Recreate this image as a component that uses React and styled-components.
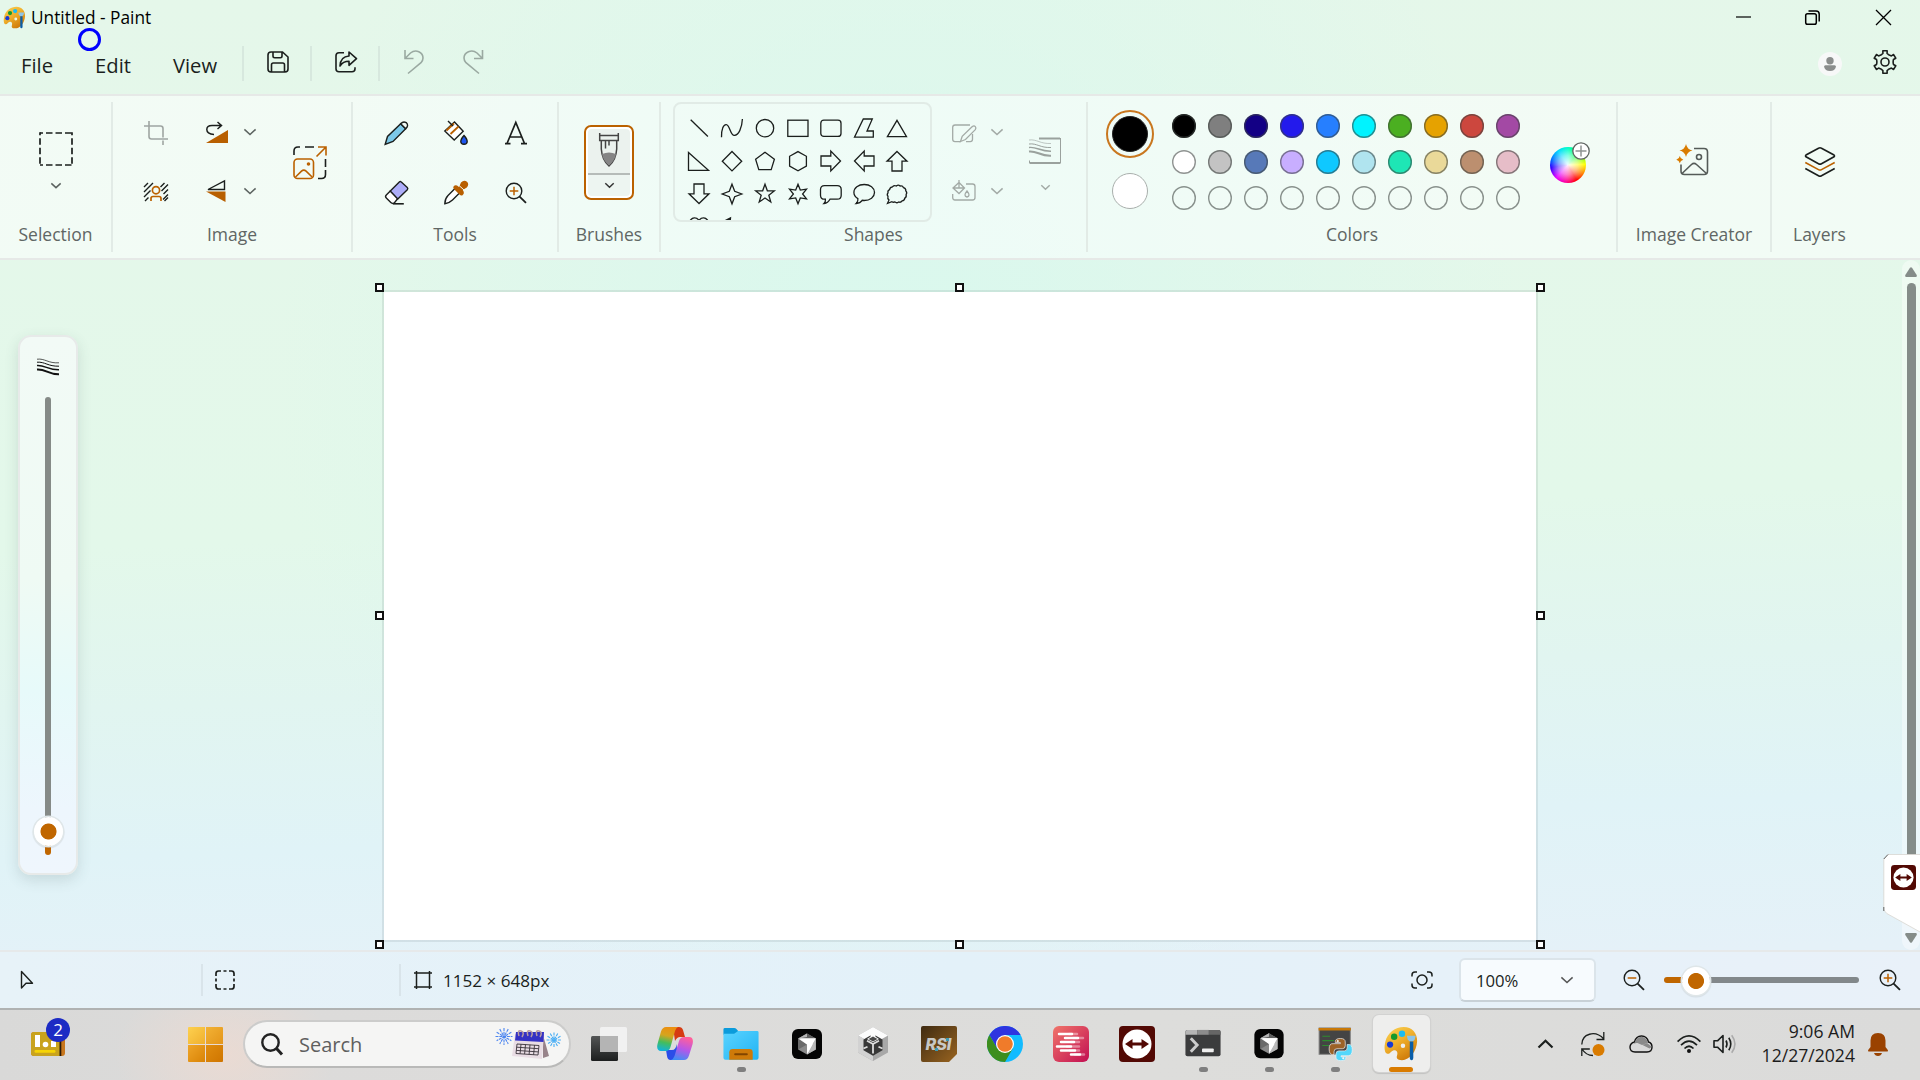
import React from "react";
import styled, { createGlobalStyle } from "styled-components";

const GlobalStyle = createGlobalStyle`
  *, *::before, *::after { box-sizing: border-box; }
  body { margin: 0; overflow: hidden; }
`;

const INK = "#1b1f1d";
const ACCENT = "#bb6100";
const MUTED = "#a3aaa6";

/* ---------- shell ---------- */

const Desktop = styled.div`
  width: 1920px;
  height: 1080px;
  display: flex;
  flex-direction: column;
  position: relative;
  overflow: hidden;
  font-family: "Open Sans", "Noto Sans", sans-serif;
  color: ${INK};
  background:
    radial-gradient(ellipse 620px 700px at 900px 380px, rgba(216, 248, 238, 0.9), rgba(216, 248, 238, 0) 100%),
    linear-gradient(178deg, #e5f7ea 0%, #e3f8ea 48%, #e1f5f0 62%, #e0f3f7 75%, #e5f1f8 88%, #e6f1f9 100%);
`;

const TitleBar = styled.header`
  height: 34px;
  flex: none;
  display: flex;
  align-items: center;
  padding-left: 3px;
`;

const Title = styled.span`
  margin-left: 5px;
  padding-top: 2px;
  flex: 1;
  font-size: 17.3px;
  color: #000;
  line-height: 34px;
`;

const WindowButton = styled.button`
  width: ${(p) => p.$w}px;
  height: 33px;
  padding: 0;
  border: 0;
  background: none;
  display: flex;
  align-items: center;
  justify-content: center;
`;

const MenuBar = styled.nav`
  height: 62px;
  flex: none;
  display: flex;
  align-items: center;
  padding: 0 23px 4px 0;
  border-bottom: 2px solid #e6e9e7;
`;

const MenuItem = styled.span`
  width: ${(p) => p.$w}px;
  padding-top: 5px;
  text-align: center;
  font-size: 20.2px;
  line-height: 30px;
`;

const MenuRule = styled.i`
  width: 2px;
  height: 35px;
  background: #d7e8de;
  margin-left: ${(p) => p.$ml || 0}px;
  margin-top: 2px;
`;

const Slot = styled.span`
  display: flex;
  align-items: center;
  justify-content: center;
  flex: none;
  width: ${(p) => p.$w || 60}px;
  height: ${(p) => (p.$h ? p.$h + "px" : "auto")};
  margin-left: ${(p) => p.$ml || 0}px;
  padding-left: ${(p) => p.$pl || 0}px;
  padding-bottom: ${(p) => p.$pb || 0}px;
`;

const Spacer = styled.span`
  flex: 1;
`;

const Avatar = styled.span`
  width: 24px;
  height: 24px;
  margin: 3px 31px 0 0;
  border-radius: 50%;
  background: #f7f8f8;
  display: flex;
  align-items: center;
  justify-content: center;
`;

const Glyph = styled.svg`
  display: block;
  flex: none;
  overflow: visible;
  fill: none;
  stroke: ${(p) => p.$c || INK};
  stroke-width: ${(p) => p.$sw || 1.4};
`;

/* ---------- ribbon ---------- */

const Ribbon = styled.section`
  height: 164px;
  flex: none;
  display: flex;
  padding: 6px 0;
  border-bottom: 2px solid #e6e9e7;
  background: rgba(255, 255, 255, 0.53);
`;

const GroupBox = styled.div`
  width: ${(p) => p.$w}px;
  height: 150px;
  flex: none;
  display: flex;
  flex-direction: column;
  border-right: ${(p) => (p.$last ? 0 : 2)}px solid #e2ebe6;
`;

const GroupBody = styled.div`
  height: 120px;
  display: flex;
  justify-content: ${(p) => p.$justify || "flex-start"};
`;

const GroupLabel = styled.div`
  text-align: center;
  font-size: 17.5px;
  line-height: 24px;
  white-space: nowrap;
  color: #606664;
`;

const Stack = styled.div`
  display: flex;
  flex-direction: column;
  align-items: center;
  padding-top: ${(p) => p.$pt || 0}px;
  gap: ${(p) => p.$gap || 0}px;
  margin-left: ${(p) => p.$ml || 0}px;
`;

const Row = styled.div`
  display: flex;
  height: 60px;
  align-items: center;
`;

const ToolGrid = styled.div`
  display: grid;
  grid-template-columns: repeat(3, 60px);
  grid-auto-rows: 60px;
  padding: 1px 0 0 13px;
  place-items: center;
`;

const BrushButton = styled.button`
  width: 50px;
  height: 75px;
  margin: 23px 0 0;
  padding: 2px;
  border: 2px solid ${ACCENT};
  border-radius: 7px;
  background: #fff;
  display: flex;
  flex-direction: column;
`;

const BrushFace = styled.span`
  width: 100%;
  height: 46px;
  flex: none;
  border-radius: 4px 4px 0 0;
  border-bottom: 2px solid #b5bbb8;
  background: #ebf2ee;
  display: flex;
  align-items: flex-start;
  justify-content: center;
  padding-top: 4px;
`;

const BrushMore = styled.span`
  width: 100%;
  flex: 1;
  border-radius: 0 0 4px 4px;
  background: #edf5f1;
  display: flex;
  align-items: center;
  justify-content: center;
`;

const ShapeGallery = styled.div`
  width: 259px;
  height: 120px;
  margin-left: 12px;
  padding: 7px 8px 0 7.5px;
  border: 2px solid #e1ebe6;
  border-radius: 8px;
  overflow: hidden;
  display: grid;
  grid-template-columns: repeat(7, 33px);
  grid-auto-rows: 33px;
  place-items: center;
`;

const CurrentColor = styled.span`
  width: 48px;
  height: 48px;
  border-radius: 50%;
  border: ${(p) => (p.$on ? "2px solid #c9771f" : "0")};
  display: flex;
  align-items: center;
  justify-content: center;
  &::before {
    content: "";
    width: 36px;
    height: 36px;
    border-radius: 50%;
    border: 1.5px solid ${(p) => (p.$on ? "#222" : "#a9afac")};
    background: ${(p) => p.$c};
  }
`;

const Palette = styled.div`
  display: grid;
  grid-template-columns: repeat(10, 36px);
  grid-auto-rows: 36px;
  place-items: center;
  padding-top: 6px;
  margin-left: 12px;
`;

const Swatch = styled.i`
  width: 24px;
  height: 24px;
  border-radius: 50%;
  background: ${(p) => p.$c};
  box-shadow: inset 0 0 0 1.4px rgba(60, 68, 64, 0.58);
`;

const Wheel = styled.span`
  position: relative;
  width: 36px;
  height: 36px;
  margin: 45px 0 0 24px;
  border-radius: 50%;
  background:
    radial-gradient(circle, rgba(255, 255, 255, 0.95) 0%, rgba(255, 255, 255, 0.5) 38%, rgba(255, 255, 255, 0) 68%),
    conic-gradient(#00ffc8, #00ff3c 40deg, #ffff00 88deg, #ff7a00 122deg, #ff0000 150deg, #ff0090 185deg, #e600ff 222deg, #2a00ff 262deg, #0060ff 285deg, #00d8ff 325deg, #00ffc8);
`;

const WheelBadge = styled.span`
  position: absolute;
  left: 22px;
  top: -5px;
  width: 18px;
  height: 18px;
`;

/* ---------- workspace ---------- */

const Workspace = styled.main`
  height: 692px;
  flex: none;
  display: flex;
  align-items: flex-start;
  border-bottom: 2px solid #e6e9ea;
`;

const SizePanel = styled.aside`
  width: 60px;
  height: 540px;
  margin: 75px 0 0 18px;
  border: 2px solid #e7eae9;
  border-radius: 13px;
  background: linear-gradient(#f2faf6, #effaf4 45%, #e7fafa 66%, #edf6fd 88%, #eff6fd);
  box-shadow: 0 5px 14px rgba(60, 90, 90, 0.16);
  display: flex;
  flex-direction: column;
  align-items: center;
  padding-top: 21px;
`;

const VTrack = styled.div`
  width: 6px;
  height: 458px;
  margin-top: 21px;
  border-radius: 3px;
  background: linear-gradient(#858a87 0 435px, #c06600 435px);
  display: flex;
  justify-content: center;
`;

const Thumb = styled.i`
  flex: none;
  width: ${(p) => p.$d}px;
  height: ${(p) => p.$d}px;
  border-radius: 50%;
  background: radial-gradient(circle, #c06600 0 7.6px, #fff 8.4px);
  box-shadow: 0 0 0 1.5px #dfe6e8, 0 1px 1px 1.5px rgba(0, 0, 0, 0.08);
  margin-top: ${(p) => p.$mt || 0}px;
  margin-left: ${(p) => p.$ml || 0}px;
`;

const Sheet = styled.div`
  position: relative;
  width: 1156px;
  height: 652px;
  margin: 30px 0 0 304px;
  border: 2px solid rgba(90, 110, 108, 0.13);
  background: #fff;
  background-clip: padding-box;
`;

const Handle = styled.i`
  position: absolute;
  left: ${(p) => p.$x}px;
  top: ${(p) => p.$y}px;
  width: 9px;
  height: 9px;
  border: 2px solid #111;
  background: #fff;
`;

const ScrollBar = styled.div`
  width: 18px;
  height: 690px;
  margin-left: auto;
  padding: 7px 0;
  border-radius: 9px;
  background: rgba(255, 255, 255, 0.4);
  display: flex;
  flex-direction: column;
  align-items: center;
`;

const ScrollThumb = styled.i`
  width: 9px;
  height: 639px;
  margin: 6px 0 11px;
  border-radius: 5px;
  background: #858c89;
`;

const RemoteTab = styled.div`
  position: absolute;
  left: 1883px;
  top: 854px;
  width: 37px;
  height: 79px;
`;

const ClickMark = styled.i`
  position: absolute;
  left: 78px;
  top: 28px;
  width: 23px;
  height: 23px;
  border: 3px solid #0000fe;
  border-radius: 50%;
`;

/* ---------- status bar ---------- */

const StatusBar = styled.footer`
  height: 56px;
  flex: none;
  display: flex;
  align-items: center;
  background: linear-gradient(90deg, #e7f2f8, #e3f1f9 50%, #e9f1f9);
`;

const StatusCell = styled.div`
  width: ${(p) => p.$w}px;
  height: 32px;
  padding-left: ${(p) => p.$pl}px;
  border-right: ${(p) => (p.$end ? 0 : 2)}px solid #d9e4ea;
  display: flex;
  align-items: center;
  font-size: 17.1px;
  gap: 11px;
  white-space: nowrap;
`;

const ZoomSelect = styled.div`
  width: 137px;
  height: 44px;
  margin-left: 26px;
  padding: 0 21px 0 15px;
  border: 2px solid #dbe4ea;
  border-bottom-color: #c8d1d7;
  border-radius: 6px;
  background: #f7fbfe;
  display: flex;
  align-items: center;
  justify-content: space-between;
  font-size: 16.7px;
`;

const HTrack = styled.div`
  width: 195px;
  height: 6px;
  margin: 0 19px 0 18px;
  border-radius: 3px;
  background: linear-gradient(90deg, #c06600 0 31px, #82888b 31px);
  display: flex;
  align-items: center;
`;

/* ---------- taskbar ---------- */

const Taskbar = styled.footer`
  height: 72px;
  flex: none;
  display: flex;
  align-items: center;
  padding-bottom: 2px;
  border-top: 2px solid #b0b2b2;
  background:
    radial-gradient(ellipse 110px 80px at 225px 45px, rgba(240, 218, 208, 0.7), rgba(240, 218, 208, 0)),
    linear-gradient(90deg, #d9d9d8, #dcdbda 15%, #dddddb 60%, #dbdbda);
`;

const WidgetButton = styled.div`
  position: relative;
  width: 34px;
  height: 24px;
  margin: 0 123px 0 31px;
`;

const CountBadge = styled.span`
  position: absolute;
  left: 15px;
  top: -14px;
  width: 24px;
  height: 24px;
  border-radius: 50%;
  background: #1c2bc4;
  color: #fff;
  font-size: 17px;
  line-height: 23px;
  text-align: center;
`;

const StartLogo = styled.div`
  width: 35px;
  height: 35px;
  display: grid;
  grid-template-columns: 17px 17px;
  grid-template-rows: 17px 17px;
  gap: 1px;
  i:nth-child(1) { background: linear-gradient(135deg, #fdd04f, #f0b02e); border-radius: 1px 0 0 0; }
  i:nth-child(2) { background: linear-gradient(135deg, #f2b235, #e4951a); border-radius: 0 1px 0 0; }
  i:nth-child(3) { background: linear-gradient(135deg, #efa528, #d98306); border-radius: 0 0 0 1px; }
  i:nth-child(4) { background: linear-gradient(135deg, #e08d10, #cf7500); border-radius: 0 0 1px 0; }
`;

const SearchBox = styled.div`
  width: 328px;
  height: 48px;
  margin: 0 5px 0 20px;
  padding: 0 7px 0 16px;
  border: 2px solid #cccccb;
  border-bottom-color: #b9b9b8;
  border-radius: 24px;
  background: #f5f5f4;
  display: flex;
  align-items: center;
  font-size: 20px;
  color: #5f5f5f;
  gap: 16px;
`;

const TaskSlot = styled.div`
  width: 66px;
  height: 68px;
  flex: none;
  display: flex;
  justify-content: center;
`;

const TaskTile = styled.div`
  width: 57px;
  height: 57px;
  margin-top: 5px;
  border-radius: 6px;
  display: flex;
  flex-direction: column;
  align-items: center;
  padding-top: 11px;
  background: ${(p) => (p.$active ? "#eeeeed" : "transparent")};
  box-shadow: ${(p) => (p.$active ? "0 0 0 1px #d2d2d1, 0 1px 1px 1px rgba(0,0,0,.12)" : "none")};
`;

const RunMark = styled.i`
  width: ${(p) => (p.$active ? 24 : 9)}px;
  height: 5px;
  margin-top: 6px;
  border-radius: 3px;
  background: ${(p) => (p.$active ? "#d97b00" : "#7f7f7f")};
`;

const Clock = styled.div`
  width: 110px;
  margin: 0 13px 3px 6px;
  text-align: right;
  font-size: 17.6px;
  line-height: 24px;
  color: #1c1c1c;
`;

/* ---------- glyphs ---------- */

const Chevron = ({ w = 12, c = "#5c6360", sw = 1.5 }) => (
  <Glyph width={w} height={w / 2} viewBox="0 0 12 6" $c={c} $sw={(sw * 12) / w}>
    <path d="M.4.4 6 5.6 11.6.4" />
  </Glyph>
);

const PaintLogo = ({ s }) => (
  <svg width={s} height={s} viewBox="0 0 36 36">
    <defs>
      <linearGradient id={"pal" + s} x1="0" y1="0" x2=".6" y2="1">
        <stop offset="0" stopColor="#f9d356" />
        <stop offset=".5" stopColor="#f0b02c" />
        <stop offset="1" stopColor="#d07c0a" />
      </linearGradient>
    </defs>
    <path fill={`url(#pal${s})`} d="M21 1C29 1 35 7 34.500 16 34 26 27 35 19 35c-5 0-6-2-5-5 1.200-3.500-1-6-4-5-3 1-3 4-6 3.500C1 28 .5 22 2 16 4 7 12 1 21 1Zm-1 17a2.300 2.300 0 1 0 .01 4.600A2.300 2.300 0 0 0 20 18Z" />
    <circle cx="19" cy="8" r="3.300" fill="#1cbcf2" />
    <circle cx="11" cy="11" r="3.300" fill="#149a2d" />
    <circle cx="6.800" cy="19" r="3.200" fill="#1739d4" />
    <path fill="#8cc4ea" d="M24 10h9l-1 4-2 2h-3l-2-2Z" />
    <path fill="#0b5ea8" d="M27 16h3.600v16q0 3-1.800 3T27 32Z" />
  </svg>
);

const gearPoints = Array.from({ length: 6 }, (_, k) => {
  const a = (k * 60 - 90) * (Math.PI / 180);
  return [[-0.42, 8.2], [-0.24, 8.8], [-0.19, 11.4], [0.19, 11.4], [0.24, 8.8], [0.42, 8.2]]
    .map(([d, r]) => `${(12 + r * Math.cos(a + d)).toFixed(2)},${(12 + r * Math.sin(a + d)).toFixed(2)}`)
    .join(" ");
}).join(" ");

const Waves = ({ c = "#111", w = 22 }) => (
  <Glyph width={w} height="18" viewBox="0 0 22 18" $c={c}>
    <path strokeWidth=".7" d="M0 1.200c8-1 11 4.300 22 3.600" />
    <path strokeWidth="1" d="M0 4.200c8-.6 11 4.300 22 4" />
    <path strokeWidth="1.400" d="M0 7.500c8-.6 11 4.500 22 4.300" />
    <path strokeWidth="2" d="M0 11.500c9-.6 11 5 22 4.800" />
  </Glyph>
);

const star = (n, R, r, rot = -90) =>
  Array.from({ length: n * 2 }, (_, i) => {
    const a = ((i * 180) / n + rot) * (Math.PI / 180);
    const q = i % 2 ? r : R;
    return `${(12 + q * Math.cos(a)).toFixed(2)},${(12 + q * Math.sin(a)).toFixed(2)}`;
  }).join(" ");

const ARROW = "12,2.5 22,12.2 17,12.2 17,22 7,22 7,12.2 2,12.2";

const SHAPES = [
  <path d="m3.700 3.700 17.200 16.800" />,
  <path d="M1.500 21.300C1.300 13 3.500 8.300 6.300 8.600c3.700.4 3.700 10.400 8 10.800C18.500 19.600 22 12 22.400 3" />,
  <circle cx="12" cy="12.200" r="8.700" />,
  <rect x="1.800" y="4.200" width="20.200" height="16.200" />,
  <rect x="1.800" y="4.200" width="20.200" height="16.200" rx="3" />,
  <path d="M11.300 3h9L15 15h6.300v6.100H2.500Z" />,
  <path d="M12 4.400 21.500 20.600H2.400Z" />,
  <path d="M1.500 3.500v17.800h20Z" />,
  <path d="M12 2.500 21.700 12.200 12 21.900 2.300 12.200Z" />,
  <path d="M12 3.200 21.400 10.200 18.200 20.600H5.800L2.600 10.200Z" />,
  <path d="m12 2.600 8.400 4.700v9.700L12 21.800 3.600 17V7.300Z" />,
  <polygon points={ARROW} transform="rotate(90 12 12)" />,
  <polygon points={ARROW} transform="rotate(-90 12 12)" />,
  <polygon points={ARROW} />,
  <polygon points={ARROW} transform="rotate(180 12 12)" />,
  <polygon points={star(4, 9.8, 3.8)} />,
  <polygon points={star(5, 9.8, 4)} />,
  <polygon points={star(6, 9.8, 4.6)} />,
  <path d="M5.500 3.600h12.700q4 0 4 4v5.600q0 4-4 4H11c-1.200 2.300-3 4-6 4.300 1.200-1.200 1.700-2.600 1.400-4.300H5.500q-4 0-4-4V7.600q0-4 4-4Z" />,
  <path d="M12.200 2.500c5.900 0 10.300 3.600 10.300 8s-4.400 8-10.300 8l-2-.2c-1.200 1.800-3 2.900-6 3.200 1.400-1.300 2-2.900 1.700-4.900C3.500 15.200 1.900 13 1.900 10.500c0-4.400 4.400-8 10.300-8Z" />,
  <path d="M7.500 4.800q1.800-2 3.800-.8 2-1.800 3.800 0 2.600-.6 3.400 1.700 2.600.7 2.300 3.200 1.700 1.800.3 3.700.7 2.300-1.300 3.500-.2 2.500-2.700 2.800-1.300 2-3.500 1.100-2 1.500-3.700-.1-1.600.8-3-.2l-4.400 1.600 1.500-3.300Q2.200 16.600 3 14.400q-1.500-1.800 0-3.500-.6-2.400 1.600-3.300.3-2.500 2.900-2.800Z" />,
  <path d="M12 21.500 3.500 13.500C-1 8.500 5.500-1.500 12 5.200c6.500-6.700 13 3.300 8.500 8.300Z" />,
  <path d="M2.500 7 10.500 2.800 10 8l5 1-2 5 5 2-1 6-9-7 2-2-6-3Z" />,
];

const PALETTE = [
  "#000000", "#7f7f7f", "#130085", "#231aec", "#267fff", "#00f3ff", "#4baf21", "#e6a200", "#cc473e", "#a349a4",
  "#ffffff", "#c3c3c3", "#5779b8", "#c8aeff", "#0fc8ff", "#b0e4ef", "#1ee6b5", "#ead999", "#bc8f6f", "#e6bdc8",
  ...Array(10).fill("transparent"),
];

const Magnifier = ({ plus, s = 24 }) => (
  <Glyph width={s} height={s} viewBox="0 0 24 24">
    <circle cx="10" cy="10" r="7.800" />
    <path d="m15.600 15.600 6.400 6.300" strokeWidth="1.800" />
    <path stroke={ACCENT} strokeWidth="1.500" d={plus ? "M5.700 10h8.600M10 5.700v8.600" : "M5.700 10h8.600"} />
  </Glyph>
);

const RemoteLogo = ({ s, r = 4 }) => (
  <svg width={s} height={s} viewBox="0 0 36 36">
    <rect width="36" height="36" rx={r} fill="#520904" />
    <circle cx="18" cy="18" r="14.500" fill="#fff" />
    <path fill="#520904" d="m6 18 7.500-5v3.400h9V13l7.500 5-7.500 5v-3.400h-9V23Z" />
  </svg>
);

const CubeLogo = () => (
  <svg width="36" height="36" viewBox="0 0 36 36">
    <rect x="3" y="3" width="30" height="30" rx="6" fill="#050505" />
    <path fill="#8a8a8a" d="m18 7.500 8.800 5v11L18 28.500l-8.800-5v-11Z" />
    <path fill="#5e5e5e" d="m18 7.500 8.800 5H9.200Z" />
    <path fill="#b5b5b5" d="M18 7.500 9.200 12.500 18 11Z" />
    <path fill="#6a6a6a" d="M9.200 12.500v11L18 18.500Z" />
    <path fill="#f7f7f7" d="M9.200 12.500h17.600L22 18.300h4L18 28.500V18.500Z" />
    <path fill="#b9b9b9" d="m26.800 12.500v11l-8.800 5Z" />
    <path fill="#fff" d="M11 12.500h15.800L18.300 27.500v-9Z" />
  </svg>
);

const TASKS = [
  {
    id: "views",
    art: (
      <svg width="36" height="36" viewBox="0 0 36 36">
        <defs>
          <linearGradient id="tvd" x1="0" y1="0" x2="0" y2="1"><stop stopColor="#535555" /><stop offset="1" stopColor="#1c1e1e" /></linearGradient>
        </defs>
        <rect x="0" y="10" width="27" height="25" rx="1.500" fill="url(#tvd)" />
        <rect x="9" y="1" width="27" height="25" rx="1.500" fill="#f3f3f3" opacity=".9" />
        <rect x="9" y="10" width="18" height="16" fill="#b4b4b4" />
      </svg>
    ),
  },
  {
    id: "copilot",
    art: (
      <svg width="36" height="36" viewBox="0 0 36 36">
        <defs>
          <linearGradient id="cpa" x1=".5" y1="0" x2=".3" y2="1"><stop stopColor="#ec8f11" /><stop offset=".35" stopColor="#d5a51e" /><stop offset=".65" stopColor="#44bd5c" /><stop offset="1" stopColor="#10b3dd" /></linearGradient>
          <linearGradient id="cpb" x1=".6" y1="0" x2=".3" y2="1"><stop stopColor="#ff5f9b" /><stop offset=".5" stopColor="#b657e8" /><stop offset="1" stopColor="#3d8df5" /></linearGradient>
        </defs>
        <path fill="#d63b12" d="M16 1h6q3 0 4 3l2 7h-5q-3 0-5 4Z" />
        <path fill="#2a4de8" d="M9 24h6q4 0 4.500-6l1 10-4 6h-3q-3 0-3.500-4Z" />
        <path fill="url(#cpa)" d="M9 1h12q-2 1-3 4l-4.500 16q-1 4-5 4H4Q-1 25 .5 18L4 5.500Q5.500 1 9 1Z" />
        <path fill="url(#cpb)" d="M27 34H14q2.500-1 3.500-4L22 15q1.200-4 5-4h5q5 0 3.600 7L32 29.500Q30.500 34 27 34Z" />
      </svg>
    ),
  },
  {
    id: "files",
    run: true,
    art: (
      <svg width="36" height="36" viewBox="0 0 36 36">
        <defs><linearGradient id="fex" x1="0" y1="0" x2="1" y2="1"><stop stopColor="#5ad3ff" /><stop offset="1" stopColor="#22b4f4" /></linearGradient></defs>
        <path fill="#0b9bdb" d="M0 3.500Q0 2 1.500 2H11q1.500 0 2.300 1l2 2.500L12 9H0Z" />
        <path fill="url(#fex)" d="M0 8h11l4-3h19.500Q36 5 36 6.500v26q0 2-2 2H2q-2 0-2-2Z" />
        <path fill="#ce7a09" d="M6 34.500V27q0-3.500 3.500-3.500h17Q30 23.500 30 27v7.500Z" />
        <rect x="11" y="28" width="14" height="2" rx="1" fill="#814500" />
      </svg>
    ),
  },
  { id: "editor", art: <CubeLogo /> },
  {
    id: "hub",
    art: (
      <svg width="36" height="36" viewBox="0 0 36 36">
        <path fill="#a8a8a8" d="m18 1 15 8.500v17L18 35 3 26.500v-17Z" />
        <path fill="#fcfcfc" d="m18 1 15 8.500L18 18 3 9.500Z" />
        <path fill="#d2d2d2" d="M3 9.500 18 18v17L3 26.500Z" />
        <path fill="#383838" d="m18 8 9.500 5.500v10.800L18 29.800l-9.500-5.500V13.500Z" />
        <path fill="#fcfcfc" d="m18 6 2.500 1.500v3.300L24 13l-6 3.200L12 13l3.500-2.200V7.500Z" />
        <path fill="#4a4a4a" d="M18 10.500 22.500 13 18 15.500 13.500 13Z" />
        <path fill="none" stroke="#dedede" strokeWidth="1.800" d="M18 18v9.500M18 18l-6-3.300M18 18l6-3.300M8.500 22.500l4-1.800M27.500 22.500l-4-1.800" />
      </svg>
    ),
  },
  {
    id: "rsi",
    art: (
      <svg width="36" height="36" viewBox="0 0 36 36">
        <defs><linearGradient id="rsg" x1="0" y1="0" x2="1" y2="1"><stop stopColor="#3f2b12" /><stop offset="1" stopColor="#996420" /></linearGradient></defs>
        <path fill="url(#rsg)" d="M2 0h32q2 0 2 2v26l-8 8H2q-2 0-2-2V2q0-2 2-2Z" />
        <text x="17.500" y="24" textAnchor="middle" textLength="26" lengthAdjust="spacingAndGlyphs" fontFamily="Inter, sans-serif" fontWeight="800" fontStyle="italic" fontSize="16" fill="#c8c8c6">RSI</text>
        <path fill="#3c9ab4" d="M14 22h3v3h-3ZM25 12h3v3h-3Z" />
      </svg>
    ),
  },
  {
    id: "browser",
    art: (
      <svg width="36" height="36" viewBox="0 0 36 36">
        <circle cx="18" cy="18" r="18" fill="#12bbff" />
        <path fill="#2e34e0" d="M2.400 9A18 18 0 0 1 33.600 9H18l-7.800 13.500Z" />
        <path fill="#3d8e1e" d="M2.400 9 10.200 22.500 25.800 22.500 18 36A18 18 0 0 1 2.400 9Z" />
        <circle cx="18" cy="18" r="9" fill="#fff" />
        <circle cx="18" cy="18" r="7.800" fill="#f07b2a" />
      </svg>
    ),
  },
  {
    id: "notes",
    art: (
      <svg width="36" height="36" viewBox="0 0 36 36">
        <defs><linearGradient id="ntg" x1="0" y1="0" x2="1" y2="1"><stop stopColor="#f0756a" /><stop offset="1" stopColor="#c20f52" /></linearGradient></defs>
        <rect width="36" height="36" rx="6" fill="url(#ntg)" />
        <g stroke="#fff" strokeWidth="2.500" strokeLinecap="round">
          <path opacity=".4" d="M16 8h8M20 12h10M18 16h8M14 20.500h12M17 24.500h9M22 28.500h9" />
          <path d="M6 8h13M12 12h13M8 16h13M4 20.500h14M8 24.500h14M18 28.500h9" />
        </g>
      </svg>
    ),
  },
  { id: "remote", art: <RemoteLogo s={36} /> },
  {
    id: "terminal",
    run: true,
    art: (
      <svg width="36" height="36" viewBox="0 0 36 36">
        <rect y="4" width="36" height="27" rx="2" fill="#3b3c3d" />
        <path fill="#b5b5b5" d="M2 4h10v5H0V6q0-2 2-2Z" />
        <path fill="#8c8c8c" d="M12 4h12v5H12Z" />
        <path fill="#666" d="M24 4h10q2 0 2 2v3H24Z" />
        <path fill="none" stroke="#ccc" strokeWidth="3" d="m5.500 12.500 6.500 7-6.500 7" />
        <rect x="17" y="23" width="12" height="4" rx=".8" fill="#eee" />
      </svg>
    ),
  },
  { id: "editor2", run: true, art: <CubeLogo /> },
  {
    id: "python",
    run: true,
    art: (
      <svg width="36" height="36" viewBox="0 0 36 36">
        <rect x="1.700" y="2" width="32" height="27" fill="#444" stroke="#858585" />
        <path fill="#c87807" d="M1.200 2h33v2.500h-33Z" />
        <path stroke="#2e8b2e" strokeWidth="1.200" d="M5 10.500h8M5 15h12M5 20h7" />
        <g transform="translate(12 12)" stroke="#f3f3f3" strokeWidth=".7">
          <path fill="#9c6227" d="M11.500.8q5 0 5 3.500v4q0 3-3 3H8q-3 0-3 3v3H3.500Q0 17.300 0 11.500t4-5.400h7.500V5H6.300V4q0-3.200 5.200-3.200Z" />
          <path fill="#53d7fb" d="M12 23.500q-5 0-5-3.500v-3.500q0-3 3-3h5.500q3 0 3-3V7h1.700q3.500 0 3.500 5.500t-4 6h-7.500v1.100h5V20.500q0 3-5.200 3Z" />
          <circle cx="8.800" cy="3.500" r=".8" fill="#fff" />
          <circle cx="14.500" cy="21" r=".8" fill="#fff" />
        </g>
      </svg>
    ),
  },
  { id: "paint", run: true, active: true, art: <PaintLogo s={36} /> },
];

const Snow = ({ x, y, r, c }) => (
  <g stroke={c} strokeWidth="1.100" strokeDasharray="3 .8">
    {[0, 30, 60, 90, 120, 150].map((a) => (
      <path key={a} d={`M${x - r} ${y}h${2 * r}`} transform={`rotate(${a} ${x} ${y})`} />
    ))}
  </g>
);

/* ---------- sections ---------- */

const Group = ({ label, w, last, justify, children }) => (
  <GroupBox $w={w} $last={last}>
    <GroupBody $justify={justify}>{children}</GroupBody>
    <GroupLabel>{label}</GroupLabel>
  </GroupBox>
);

const RibbonBar = () => (
  <Ribbon>
    <Group label="Selection" w={113} justify="center">
      <Stack $pt={30} $gap={17}>
        <Glyph width="34" height="34" viewBox="0 0 34 34" $sw={1.7}>
          <path strokeDasharray="3 3 6.500 3 6.500 3 6.500 3 3 0" d="M1 1H33" />
          <path strokeDasharray="3 3 6.500 3 6.500 3 6.500 3 3 0" d="M1 33H33" />
          <path strokeDasharray="3 3 6.500 3 6.500 3 6.500 3 3 0" d="M1 .2V34" />
          <path strokeDasharray="3 3 6.500 3 6.500 3 6.500 3 3 0" d="M33 .2V34" />
        </Glyph>
        <Chevron w={10} />
      </Stack>
    </Group>

    <Group label="Image" w={240}>
      <Stack $pt={1} $ml={13}>
        <Row>
          <Slot>
            <Glyph width="24" height="24" viewBox="0 0 24 24" $c="#9fa5a2" $sw={1.6}>
              <path d="M5 0v15.500q0 2.500 2.500 2.500H24M0 5h16.500Q19 5 19 7.500v9M19 19.500V24" />
            </Glyph>
          </Slot>
          <Slot $w={42} $ml={10}>
            <Glyph width="24" height="24" viewBox="0 0 24 24" $sw={1.5}>
              <path d="M9 13.500C4 13.500 1.800 11 1.800 8.500 1.800 6 4 4.500 7 4.500h9M12.500 1l4 3.500-4 3.500" />
              <path fill="#b85f00" stroke="none" d="M23 9v13H1Z" />
            </Glyph>
          </Slot>
          <Slot $w={24} $pb={2}><Chevron /></Slot>
        </Row>
        <Row>
          <Slot>
            <Glyph width="24" height="18" viewBox="0 0 24 18" $sw={1.4}>
              <path d="M0 4 4 0M0 9 9 0M0 14 6.500 7.500M1 18l3.500-3.500M16.500 4l4-4M17.500 8l6.500-6.500M19.500 11 24 6.500M19 16.500l5-5M20.500 18l3.500-3.500" />
              <g stroke={ACCENT} strokeWidth="1.700">
                <circle cx="12" cy="7.200" r="3.600" />
                <path d="M7 18v-2.500q0-2 2-2h6q2 0 2 2V18" />
              </g>
            </Glyph>
          </Slot>
          <Slot $w={42} $ml={10}>
            <Glyph width="24" height="24" viewBox="0 0 24 24" $sw={1.4}>
              <path d="M19.500 1v8.500H3Z" />
              <path fill="#b85f00" stroke="none" d="M1 11.500h19.500V22Z" />
            </Glyph>
          </Slot>
          <Slot $w={24} $pb={2}><Chevron /></Slot>
        </Row>
      </Stack>
      <Slot $w={60} $h={122} $ml={18}>
        <Glyph width="34" height="34" viewBox="0 0 34 34" $sw={1.6}>
          <path d="M1 9V5q0-4 4-4h2M12 1h9M32.500 13v8M32.500 24v4.500q0 4-4 4H25" />
          <g stroke={ACCENT}>
            <path d="M23.500 10.500 32.500 1.500M25 1h8v8.500" />
            <rect x="1" y="13" width="19.500" height="19.500" rx="3.500" />
            <path d="m2.500 31 6-5.800q2.300-2 4.600 0l6 5.800" />
            <circle cx="15.500" cy="18" r="1" fill={ACCENT} />
          </g>
        </Glyph>
      </Slot>
    </Group>

    <Group label="Tools" w={206}>
      <ToolGrid>
        <Glyph width="24" height="24" viewBox="-.5 0 24 24">
          <path fill="#7cc8e8" d="M.7 23.300 3 15.500 16.200 2.800l5 5L8.500 20.500Z" />
          <path fill="#f1faf6" d="M16.200 2.800q2.500-3 5.500-1.200 3 3-.5 6.200Z" />
        </Glyph>
        <Glyph width="24" height="24" viewBox="0 0 24 24">
          <path fill="#fff" d="M.8 10 10.500 1l8.700 9.300-9 8.800Z" />
          <path stroke={ACCENT} strokeWidth="1.800" d="M2.500 9.500 10 2.500M6.500 13l8-7.500" />
          <path d="M4 0l5 5" />
          <path fill="#1d55f0" d="M20 14.500c4.500 5 4 8.500 0 8.800-4-.3-4.500-3.800 0-8.800Z" />
        </Glyph>
        <Glyph width="24" height="24" viewBox="0 0 24 24" $sw={1.7}>
          <path d="M3 22.500 11.800 1.500 20.500 22.500M5.500 16h12.500M1 22.700h5.500M17 22.700h6" />
        </Glyph>
        <Glyph width="24" height="24" viewBox="-.8 .5 24 24">
          <path fill="#fff" d="M5.500 10.500 1.500 14.500q-1.500 1.500 0 3l4.500 4.500q1.500 1.500 3.500.5l3.500-4.500Z" />
          <path fill="#adadf8" d="m5.500 10.500 9-9q1-1 2 0l6 5.500q1 1 0 2.300L13 18.500Z" />
          <path d="M8 23.300h11" strokeWidth="1.600" />
        </Glyph>
        <Glyph width="24" height="24" viewBox="0 .5 24 24">
          <path fill="#fff" d="M.8 23.200Q1 18 4 15l7-7 4.500 4.500-7 7q-3 3-7.700 3.700Z" />
          <path fill="#b85f00" stroke="none" d="M9.500 6q1.500-2 3.500-1l2 1.500 2-4.500q3-3 6-.7 2.500 2.700-.2 5.700l-4 2.500 1 2q.5 2-1.300 3.200-1.500.7-3-.7l-5.500-5.500Q8.800 7.300 9.500 6Z" />
          <path stroke="#f1faf6" strokeWidth="1" d="m14.500 4.500 5.500 5" />
        </Glyph>
        <Magnifier plus />
      </ToolGrid>
    </Group>

    <Group label="Brushes" w={102} justify="center">
      <BrushButton>
        <BrushFace>
          <Glyph width="20" height="34" viewBox="0 0 20 34" $sw={1.5} $c="#444">
            <path d="M.7 0v7.500h18.600V0M1 2.500h18M2.300 8v8Q3 27 10 33q7-6 7.700-17V8M6.500 8v7.500M10 8v4.500" />
            <path fill="#858585" stroke="none" d="M3 21q7-3 14 0-1 6.500-7 11.500Q4 27.500 3 21Z" />
          </Glyph>
        </BrushFace>
        <BrushMore><Chevron w={9} c="#333" /></BrushMore>
      </BrushButton>
    </Group>

    <Group label="Shapes" w={427}>
      <ShapeGallery>
        {SHAPES.map((s, i) => (
          <Glyph key={i} width="24" height="24" viewBox="0 0 24 24" $sw={1.3}>{s}</Glyph>
        ))}
      </ShapeGallery>
      <Stack $pt={1} $ml={1}>
        <Row>
          <Slot $w={44} $ml={9}>
            <Glyph width="24" height="24" viewBox="0 0 24 24" $c={MUTED} $sw={1.3}>
              <path d="M18 4H3Q.7 4 .7 6.300v12Q.7 20.600 3 20.600h6M20.500 13v5.300q0 2.300-2.300 2.300H14" />
              <path d="m8.500 20.500 1.700-5.200L20.300 5.600q1.800-1.300 3 0t0 3L13.500 18.500Z" />
            </Glyph>
          </Slot>
          <Slot $w={22} $pb={2}><Chevron c={MUTED} /></Slot>
        </Row>
        <Row>
          <Slot $w={44} $ml={9}>
            <Glyph width="24" height="24" viewBox="0 0 24 24" $c={MUTED} $sw={1.3}>
              <path d="M14 4h6.500q2.500 0 2.500 2.500v11q0 2.500-2.500 2.500H3Q.7 20 .7 17.500V14" />
              <path d="M7 2.500 12.500 8 7 13.500 1 8ZM1 8h11.500M7 0v8" />
              <path d="M15 11q4 5 0 6-4-1 0-6Z" />
            </Glyph>
          </Slot>
          <Slot $w={22} $pb={2}><Chevron c={MUTED} /></Slot>
        </Row>
      </Stack>
      <Stack $pt={35} $gap={20} $ml={21}>
        <Glyph width="32" height="28" viewBox="0 0 32 28" $c="#9aa19d">
          <path strokeWidth="2" d="M10 1.500h21M1 26h30" />
          <path strokeWidth="1" d="M31.500 1v25.500M.5 23.500v3" />
          <path strokeWidth=".6" d="M0 3c8-1 11 4 22 3.500" />
          <path strokeWidth="1" d="M0 7c8-1 11 4 22 3.500" />
          <path strokeWidth="1.400" d="M0 10.500c8-1 11 4 22 3.700" />
          <path strokeWidth="2" d="M0 14.500c8-1 11 4.700 22 4.200" />
        </Glyph>
        <Chevron w={9} c={MUTED} />
      </Stack>
    </Group>

    <Group label="Colors" w={530}>
      <Stack $pt={7.5} $gap={9} $ml={18}>
        <CurrentColor $on $c="#000" />
        <CurrentColor $c="#fff" />
      </Stack>
      <Palette>
        {PALETTE.map((c, i) => <Swatch key={i} $c={c} />)}
      </Palette>
      <Wheel>
        <WheelBadge>
          <Glyph width="18" height="18" viewBox="0 0 18 18" $c="#5f6562" $sw={1.3}>
            <circle cx="9" cy="9" r="8.200" fill="#fff" />
            <path d="M9 3.500v11M3.500 9h11" stroke="#8f9492" strokeWidth="1.500" />
          </Glyph>
        </WheelBadge>
      </Wheel>
    </Group>

    <Group label="Image Creator" w={154} justify="center">
      <Stack $pt={42}>
        <Glyph width="36" height="32" viewBox="2 0 36 32" $c="#555b58" $sw={1.6}>
          <path d="M20 4.500h10q3.500 0 3.500 3.500v19q0 3.500-3.500 3.500H10.500Q7 30.500 7 27v-6.500M8 29.500 17.500 20.500q2.500-2.200 5 0L32.500 29.500" />
          <circle cx="25" cy="13" r="2.500" />
          <path fill="#d97b00" stroke="none" d="M12 0q1.200 5.500 6.500 6.500Q13.200 7.700 12 13 10.800 7.700 5.500 6.500 10.800 5.500 12 0ZM5.800 12q.6 3 3.500 3.700-2.900.7-3.500 3.600-.6-2.900-3.500-3.600Q5.200 15 5.800 12Z" />
        </Glyph>
      </Stack>
    </Group>

    <Group label="Layers" w={95} last justify="center">
      <Stack $pt={45}>
        <Glyph width="30" height="30" viewBox="0 0 30 30" $sw={1.6}>
          <path d="M13.500 1.200q1.500-.8 3 0L29 8q1 .9 0 1.800L16.500 16.700q-1.500.8-3 0L1 9.800Q0 8.900 1 8Z" />
          <path stroke={ACCENT} d="M.3 15.500 13.500 22.600q1.500.8 3 0L29.700 15.500" />
          <path d="M.3 21.500 13.500 28.800q1.500.8 3 0L29.700 21.500" />
        </Glyph>
      </Stack>
    </Group>
  </Ribbon>
);

const HANDLES = [
  [-9.5, -9], [571, -9], [1152, -9],
  [-9.5, 319], [1152, 319],
  [-9.5, 648], [571, 648], [1152, 648],
];

export default function App() {
  return (
    <Desktop>
      <GlobalStyle />
      <TitleBar>
        <PaintLogo s={23} />
        <Title>Untitled - Paint</Title>
        <WindowButton $w={69}>
          <Glyph width="15" height="15" viewBox="0 0 15 15" $c="#000" $sw={1.2}><path d="M0 7h15" /></Glyph>
        </WindowButton>
        <WindowButton $w={69}>
          <Glyph width="15" height="15" viewBox="0 0 15 15" $c="#000" $sw={1.5}>
            <rect x=".7" y="3.700" width="10.600" height="10.600" rx="1.800" />
            <path d="M3.500.9H11q3.200 0 3.200 3.200V11.500" />
          </Glyph>
        </WindowButton>
        <WindowButton $w={73}>
          <Glyph width="15" height="15" viewBox="0 0 15 15" $c="#000" $sw={1.3}><path d="m0 0 15 15M15 0 0 15" /></Glyph>
        </WindowButton>
      </TitleBar>

      <MenuBar>
        <MenuItem $w={74}>File</MenuItem>
        <MenuItem $w={78}>Edit</MenuItem>
        <MenuItem $w={86}>View</MenuItem>
        <MenuRule $ml={4} />
        <Slot $w={66} $pl={1}>
          <Glyph width="22" height="22" viewBox="0 0 22 22" $sw={1.6}>
            <path d="M4 1h11.500L21 6v12q0 3-3 3H4q-3 0-3-3V4q0-3 3-3ZM6 1v4q0 1.700 1.700 1.700h5.600Q15 6.700 15 5V1M4.500 21v-7.200q0-1.800 1.800-1.800h9.400q1.800 0 1.800 1.800V21" />
          </Glyph>
        </Slot>
        <MenuRule />
        <Slot $w={66} $pl={1}>
          <Glyph width="22" height="22" viewBox="0 0 22 22" $sw={1.6}>
            <path d="M9 1.700H4q-3 0-3 3v13q0 3 3 3h13q3 0 3-3v-1.500" />
            <path strokeLinejoin="round" d="M14 1l7.500 6.700L14 14.300v-4q-6 0-9 4.700Q5.500 5.500 14 5Z" />
          </Glyph>
        </Slot>
        <MenuRule />
        <Slot $w={68}>
          <Glyph width="20" height="24" viewBox="0 0 20 24" $c="#9aa9a1" $sw={1.6}>
            <path d="M1 0v8.500h8.500M1 8.500 6.500 3C12-1.500 19 2.500 19 8q0 2.500-2 4.700L4 23.500" />
          </Glyph>
        </Slot>
        <Slot $w={50}>
          <Glyph width="20" height="24" viewBox="0 0 20 24" $c="#9aa9a1" $sw={1.6}>
            <path d="M19.500 0v8.500H11M19.500 8.500 14 3C8.500-1.500 1 2.500 1 8q0 2.500 2 4.700l13 10.800" />
          </Glyph>
        </Slot>
        <Spacer />
        <Avatar>
          <svg width="12" height="14" viewBox="0 0 12 14" fill="#8a8d8c">
            <circle cx="6" cy="3.700" r="3.700" />
            <path d="M1.500 8.300h9q1.500 0 1.500 1.500Q11 14 6 14T0 9.800Q0 8.300 1.500 8.300Z" />
          </svg>
        </Avatar>
        <Glyph width="24" height="24" viewBox="0 0 24 24" $sw={1.6}>
          <polygon points={gearPoints} strokeLinejoin="round" />
          <circle cx="12" cy="12" r="4" />
        </Glyph>
      </MenuBar>

      <RibbonBar />

      <Workspace>
        <SizePanel>
          <Waves />
          <VTrack><Thumb $d={29} $mt={420} $ml={1} /></VTrack>
        </SizePanel>
        <Sheet>
          {HANDLES.map(([x, y]) => <Handle key={x + "/" + y} $x={x} $y={y} />)}
        </Sheet>
        <ScrollBar>
          <svg width="12" height="10" viewBox="0 0 12 10" fill="#858c89"><path d="M5 .8q1-1.300 2 0L11.700 8q.5 2-1 2H1.300Q-.2 10 .3 8Z" /></svg>
          <ScrollThumb />
          <svg width="12" height="10" viewBox="0 0 12 10" fill="#858c89"><path d="M5 9.200q1 1.300 2 0L11.700 2q.5-2-1-2H1.300Q-.2 0 .3 2Z" /></svg>
        </ScrollBar>
      </Workspace>

      <StatusBar>
        <StatusCell $w={203} $pl={20}>
          <Glyph width="14" height="20" viewBox="0 0 14 20"><path strokeLinejoin="round" d="M1.500 1.500v16.500L6 13.300h6.500Z" /></Glyph>
        </StatusCell>
        <StatusCell $w={198} $pl={12}>
          <Glyph width="20" height="20" viewBox="0 0 20 20" $sw={1.7}>
            <path d="M1 6V3.500Q1 1 3.500 1H6M8.500 1h3M14 1h2.500Q19 1 19 3.500V6M19 8.500v3M19 14v2.500q0 2.500-2.500 2.500H14M11.500 19h-3M6 19H3.500Q1 19 1 16.500V14M1 11.500v-3" />
          </Glyph>
        </StatusCell>
        <StatusCell $w={200} $pl={13} $end>
          <Glyph width="18" height="18" viewBox="0 0 18 18" $sw={1.5}>
            <path d="M2.500 0v18M15.500 0v18M0 2h18M0 16h18" />
          </Glyph>
          1152 × 648px
        </StatusCell>
        <Spacer />
        <Glyph width="22" height="18" viewBox="0 0 22 18" $sw={1.5}>
          <path d="M1 5.500V4q0-3 3-3h2M16 1h2q3 0 3 3v1.500M21 12.500V14q0 3-3 3h-2M6 17H4q-3 0-3-3v-1.500" />
          <circle cx="11" cy="9" r="5" />
        </Glyph>
        <ZoomSelect>100%<Chevron c="#555" /></ZoomSelect>
        <Slot $w={24} $ml={26}><Magnifier /></Slot>
        <HTrack><Thumb $d={28} $ml={18} $mt={1} /></HTrack>
        <Slot $w={24}><Magnifier plus /></Slot>
        <Slot $w={18} />
      </StatusBar>

      <Taskbar>
        <WidgetButton>
          <svg width="34" height="24" viewBox="0 0 34 24">
            <rect width="34" height="24" rx="3" fill="#c8771d" />
            <path fill="#c9a31d" d="M3 0h26v24H3q-3 0-3-3V3q0-3 3-3Z" />
            <path fill="#2a1a08" d="M28.500 8h1.800v16h-1.800Z" />
            <path fill="#fff" d="M4 3h5v12H4ZM20 9h5v6h-5Z" />
            <circle cx="14.500" cy="12.500" r="2.800" fill="#fff" />
            <rect x="3.500" y="18" width="21" height="2.800" rx="1.200" fill="#f6d404" />
          </svg>
          <CountBadge>2</CountBadge>
        </WidgetButton>
        <StartLogo><i /><i /><i /><i /></StartLogo>
        <SearchBox>
          <Glyph width="22" height="22" viewBox="0 0 22 22" $c="#222" $sw={2.4}>
            <circle cx="9.500" cy="9.500" r="8.200" />
            <path strokeWidth="3" d="m15.500 15.500 5.500 6" />
          </Glyph>
          <span>Search</span>
          <Spacer />
          <svg width="68" height="32" viewBox="0 0 68 32">
            <Snow x={10} y={8.5} r={8.5} c="#4d86f0" />
            <Snow x={60} y={12} r={7.5} c="#4aaef5" />
            <path fill="#98838a" d="m49 7 6 21-6 2Z" />
            <path fill="#e9dde4" d="M21 6h29l-2 25-30-3Z" />
            <path fill="#3431c4" d="M22 4h28l-.5 10L21 12.500Z" />
            <path stroke="#3a333a" strokeWidth=".9" fill="none" d="m23 16 22 1.500-1 9.500-22-1.500ZM22.600 19.200l22 1.500M22.300 22.400l22 1.500M27 16.200l-.9 9.500M31.500 16.500l-.9 9.500M36 16.800l-.9 9.500M40.500 17.200l-.9 9.500" />
            <path stroke="#b79ba0" strokeWidth="1.500" fill="none" d="M25 8q-2-6 2-5t1 6M34 8q-2-6 2-5t1 6M43 8q-2-6 2-5t1 6" />
          </svg>
        </SearchBox>
        {TASKS.map((t) => (
          <TaskSlot key={t.id}>
            <TaskTile $active={t.active}>
              {t.art}
              {t.run && <RunMark $active={t.active} />}
            </TaskTile>
          </TaskSlot>
        ))}
        <Spacer />
        <Slot $w={40}><Glyph width="15" height="8" viewBox="0 0 15 8" $sw={2.2}><path d="M.5 7.500 7.500.8l7 6.700" /></Glyph></Slot>
        <Slot $w={28} $ml={14}>
          <Glyph width="24" height="24" viewBox="0 0 24 24" $sw={1.3}>
            <path d="M.8 12.500C.8 2 14-2.500 22.800 7M22.800 0v7.500H15.500M.8 24v-7h8M1 17q4 6.500 11 6.500" />
            <circle cx="17.500" cy="18" r="6" fill="#d97b00" stroke="none" />
          </Glyph>
        </Slot>
        <Slot $w={28} $ml={20}>
          <Glyph width="24" height="18" viewBox="0 0 24 18" $c="#111" $sw={1.4}>
            <path fill="#d9d9d9" d="M6 17q-5 0-5-5 .3-4 4.500-5Q7 1 12.500 1t7 6Q23 8 23 12q0 5-5 5Z" />
            <path fill="#8a8a8a" stroke="none" d="M5.500 8Q7.500 1.700 12.500 1.700q4.800.3 6.500 6L13.500 10l7 3.500q2-1 2-2L18 8l-5 2-4.500-2Q5 7.500 2 10.500Z" />
          </Glyph>
        </Slot>
        <Slot $w={28} $ml={20}>
          <Glyph width="24" height="18" viewBox="0 0 24 18" $sw={1.7}>
            <path d="M.6 6.600q11.400-11.500 22.800 0M4 10.200q8-8 16 0M7.500 13.500q4.500-4.500 9 0" />
            <circle cx="12" cy="16" r="2" fill="#111" stroke="none" />
          </Glyph>
        </Slot>
        <Slot $w={28} $ml={8}>
          <Glyph width="24" height="20" viewBox="0 0 24 20" $sw={1.6}>
            <path strokeLinejoin="round" d="M1 6.800h3.500L10 1.500v17l-5.500-5.300H1Z" />
            <path d="M13 6.500q2 3.500 0 7M15.800 3.700q4 6.300 0 12.600" />
            <path stroke="#aaa" d="M18.700 1.200q6.500 8.800 0 17.600" />
          </Glyph>
        </Slot>
        <Clock>9:06 AM<br />12/27/2024</Clock>
        <svg width="20" height="23" viewBox="0 0 20 23" fill="#9a4200">
          <path d="M10 0q7.500.3 7.500 7.500V14l2.300 3q.5 1.500-1 1.500H1.200Q-.3 18.500.2 17l2.300-3V7.500Q2.500.3 10 0ZM6 20h8q-1 3-4 3t-4-3Z" />
        </svg>
        <Slot $w={32} />
      </Taskbar>

      <RemoteTab>
        <svg width="37" height="79" viewBox="0 0 37 79">
          <path fill="#fff" stroke="#d8d5d1" strokeWidth=".8" d="M38 .5H5L.8 5v51l3 3.500L38 78.500Z" />
          <path fill="none" stroke="#555" strokeWidth=".9" d="M.8 5 5 .5M.8 53v4" />
          <g transform="translate(8 11)"><RemoteLogo s={25} r={5} /></g>
        </svg>
      </RemoteTab>
      <ClickMark />
    </Desktop>
  );
}
